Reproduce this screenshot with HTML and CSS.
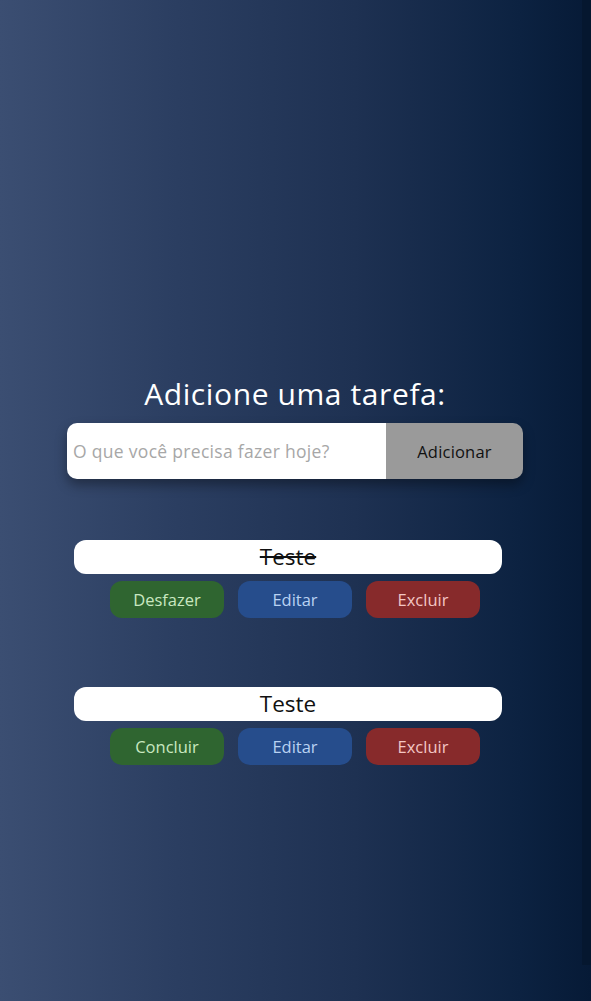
FILE: index.html
```html
<!DOCTYPE html>
<html lang="pt-BR">
<head>
<meta charset="utf-8">
<title>Tarefas</title>
<link rel="stylesheet" href="styles.css">
</head>
<body>
<main class="app">
  <h1 class="title">Adicione uma tarefa:</h1>
  <form class="add-form">
    <input class="add-input" type="text" placeholder="O que você precisa fazer hoje?">
    <button class="add-btn" type="button">Adicionar</button>
  </form>
  <ul class="list">
    <li class="task">
      <div class="task-text done">Teste</div>
      <div class="task-actions">
        <button class="act act-green" type="button">Desfazer</button>
        <button class="act act-blue" type="button">Editar</button>
        <button class="act act-red" type="button">Excluir</button>
      </div>
    </li>
    <li class="task">
      <div class="task-text">Teste</div>
      <div class="task-actions">
        <button class="act act-green" type="button">Concluir</button>
        <button class="act act-blue" type="button">Editar</button>
        <button class="act act-red" type="button">Excluir</button>
      </div>
    </li>
  </ul>
</main>
<div class="edge"></div>
</body>
</html>
```
FILE: styles.css
```css
html, body {
  margin: 0;
  padding: 0;
  height: 100%;
}
body {
  min-height: 1001px;
  background: linear-gradient(to right, #3b4e72 0%, #2b3e61 30%, #1e3152 60%, #0c2241 88%, #061a36 100%);
  font-family: "Open Sans", "DejaVu Sans", sans-serif;
  color: #fff;
  position: relative;
  overflow: hidden;
}
.edge {
  position: absolute;
  top: 0;
  right: 0;
  width: 9px;
  height: 965px;
  background: #05172f;
}
.app {
  display: flex;
  flex-direction: column;
  align-items: center;
  padding: 374px 1px 0 0;
}
.title {
  margin: 0;
  font-size: 30px;
  font-weight: 400;
  line-height: 40px;
  letter-spacing: 0.6px;
}
.add-form {
  margin: 9px 0 0;
  width: 456px;
  height: 56px;
  display: flex;
  border-radius: 10px;
  overflow: hidden;
  box-shadow: 0 6px 12px rgba(0, 0, 0, 0.35);
}
.add-input {
  flex: 1;
  border: 0;
  outline: 0;
  margin: 0;
  padding: 0 0 0 6px;
  background: #fff;
  font-family: inherit;
  font-size: 17.5px;
  letter-spacing: 0.3px;
  color: #222;
}
.add-input::placeholder {
  color: #a7a7a7;
}
.add-btn {
  width: 137px;
  border: 0;
  margin: 0;
  background: #9a9a9a;
  font-family: inherit;
  font-size: 16.5px;
  letter-spacing: 0.2px;
  color: #111;
  padding: 0;
}
.list {
  list-style: none;
  margin: 61px 0 0;
  padding: 0;
  width: 456px;
  display: flex;
  flex-direction: column;
  gap: 69px;
}
.task {
  display: flex;
  flex-direction: column;
  align-items: center;
  gap: 7px;
}
.task-text {
  box-sizing: border-box;
  width: 428px;
  height: 34px;
  margin-right: 14px;
  background: #fff;
  border-radius: 12px;
  color: #111;
  font-size: 22.5px;
  line-height: 34px;
  text-align: center;
}
.task-text.done {
  text-decoration: line-through;
  text-decoration-thickness: 1.5px;
}
.task-actions {
  display: flex;
  gap: 14px;
}
.act {
  width: 114px;
  height: 37px;
  border: 0;
  border-radius: 12px;
  font-family: inherit;
  font-size: 16.5px;
  padding: 0;
}
.act-green {
  background: #2f6530;
  color: #c9e8c0;
}
.act-blue {
  background: #264d8c;
  color: #b9d2f2;
}
.act-red {
  background: #872a2b;
  color: #f3c6c4;
}
```
